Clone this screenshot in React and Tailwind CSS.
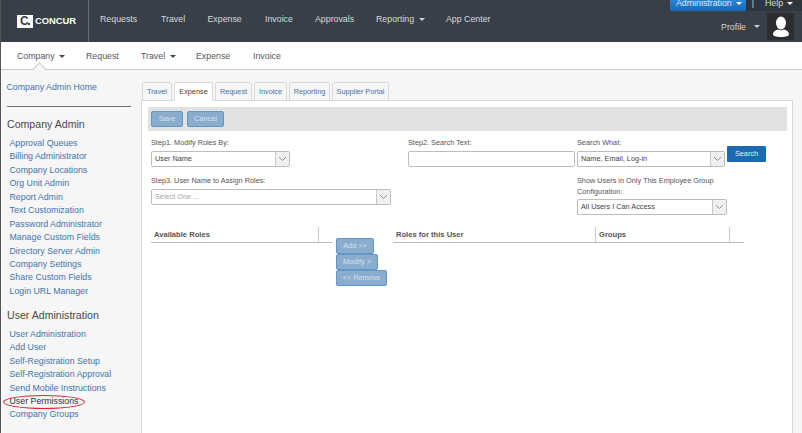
const Caret = ({ c = "border-t-[#cfd2d6]", cls = "" }) => (
  <span className={`inline-block w-0 h-0 border-x-[3px] border-x-transparent border-t-[3px] ${c} ${cls}`} />
);

const Chevron = () => (
  <svg width="9" height="6" viewBox="0 0 9 6" fill="none"><path d="M1 1l3.5 3.5L8 1" stroke="#8d9194" strokeWidth="1" /></svg>
);

const Select = ({ w, text, muted }) => (
  <div className={`${w} h-[16px] flex bg-white border border-[#bdbdbd] rounded-[2px] overflow-hidden`}>
    <div className={`flex-1 pl-[3px] text-[7.3px] leading-[14px] whitespace-nowrap ${muted ? "text-[#a8a8a8]" : "text-[#444]"}`}>{text}</div>
    <div className="w-[14px] bg-[#f0f0f0] border-l border-[#c8c8c8] flex items-center justify-center"><Chevron /></div>
  </div>
);

const Label = ({ children, cls = "" }) => <div className={`text-[7.3px] text-[#555] ${cls}`}>{children}</div>;

const SideLink = ({ children }) => <a className="block pl-[8.5px] h-[13.45px] leading-[13.45px] text-[#3f74ad] text-[8.8px] whitespace-nowrap">{children}</a>;

const companyLinks = ["Approval Queues","Billing Administrator","Company Locations","Org Unit Admin","Report Admin","Text Customization","Password Administrator","Manage Custom Fields","Directory Server Admin","Company Settings","Share Custom Fields","Login URL Manager"];
const userLinks = ["User Administration","Add User","Self-Registration Setup","Self-Registration Approval","Send Mobile Instructions"];
const tabs = [["Travel",30],["Expense",39],["Request",37],["Invoice",33],["Reporting",41],["Supplier Portal",57]];

const PaleBtn = ({ children, w, cls = "" }) => (
  <div className={`${w} h-[16px] bg-[#8aaccd] border border-[#5f97c8] rounded-[2px] text-[#d6e2ee] text-[7.3px] leading-[14px] text-center ${cls}`}>{children}</div>
);

export default function App() {
  return (
    <div className="relative w-[802px] h-[433px] overflow-hidden bg-[#f6f6f6] border-l border-[#555] font-['Liberation_Sans',Arial,sans-serif]">
      {/* top header */}
      <header className="relative h-[42px] bg-[#383f48] flex">
        <div className="w-[88px] h-full border-r border-[#666c74] flex items-center pl-[16px] gap-[2px]">
          <div className="w-[16px] h-[13px] bg-white relative overflow-hidden">
            <span className="absolute left-[3px] top-0 text-[#383f48] text-[12px] font-bold leading-[13px]">C</span>
            <span className="absolute left-[11px] top-[8px] w-[2px] h-[2px] bg-[#383f48]" />
          </div>
          <span className="text-white text-[9.4px] font-bold">CONCUR</span>
        </div>
        <nav className="flex text-[8.8px] text-[#d7d9dc] pt-[13px] leading-[12px] whitespace-nowrap">
          <span className="ml-[11px] w-[61px]">Requests</span>
          <span className="w-[46.5px]">Travel</span>
          <span className="w-[57.5px]">Expense</span>
          <span className="w-[50px]">Invoice</span>
          <span className="w-[61px]">Approvals</span>
          <span className="w-[70px]">Reporting <Caret cls="ml-[2px] align-middle" /></span>
          <span>App Center</span>
        </nav>
        <div className="ml-auto w-[132px] h-full flex flex-col items-end">
          <div className="w-full h-[11px] flex bg-[#30363d]">
            <div className="w-[76px] h-[11px] bg-gradient-to-b from-[#2a86d8] to-[#1668b4] text-[#dbe9f6] text-[8.8px] leading-[7px] pl-[6px] whitespace-nowrap">Administration <Caret c="border-t-white" cls="ml-[2px] align-middle" /></div>
            <div className="w-[14px] text-[#cfd2d6] text-[8.8px] leading-[6px] text-center">|</div>
            <div className="ml-[5px] text-[#d7d9dc] text-[8.8px] leading-[7px] whitespace-nowrap">Help <Caret c="border-t-white" cls="ml-[1px] align-middle" /></div>
          </div>
          <div className="flex items-start pr-[8px] pt-[2px]">
            <span className="text-[#cfd2d6] text-[8.8px] mt-[8px] leading-[12px]">Profile</span>
            <Caret cls="ml-[8px] mt-[12px]" />
            <div className="ml-[7px] w-[27px] h-[27px] bg-[#2b2d30] flex items-center justify-center">
              <svg width="18" height="22" viewBox="0 0 18 22" fill="white"><ellipse cx="9" cy="7" rx="5" ry="6.5" /><path d="M1 18.5c0-3 3-4.5 5-5 1.5 1 4.5 1 6 0 2 .5 5 2 5 5 0 1.5-3 2.5-8 2.5s-8-1-8-2.5z" /></svg>
            </div>
          </div>
        </div>
      </header>

      {/* sub nav */}
      <div className="relative h-[28px] bg-white border-b border-[#c9c9c9] flex text-[8.8px] text-[#55585c] leading-[29px] whitespace-nowrap">
        <span className="ml-[16px] w-[69px]">Company <Caret c="border-t-[#444]" cls="ml-[2px] align-middle" /></span>
        <span className="w-[55px]">Request</span>
        <span className="w-[55px]">Travel <Caret c="border-t-[#444]" cls="ml-[2px] align-middle" /></span>
        <span className="w-[57px]">Expense</span>
        <span>Invoice</span>
        <span className="absolute left-[33.5px] -bottom-[4px] w-[9px] h-[9px] bg-[#f6f6f6] border-l border-t border-[#c9c9c9] rotate-45" />
      </div>

      {/* body */}
      <div className="flex">
        <aside className="w-[140px] shrink-0">
          <a className="block pl-[5.5px] mt-[11px] text-[#3f74ad] text-[8.8px] leading-[13px]">Company Admin Home</a>
          <div className="ml-[6px] w-[124px] mt-[12px] border-t border-[#6e6e6e]" />
          <h3 className="pl-[6px] mt-[9px] text-[10.6px] leading-[16px] font-normal text-[#4a4a4a]">Company Admin</h3>
          <div className="mt-[5px]">{companyLinks.map(l => <SideLink key={l}>{l}</SideLink>)}</div>
          <h3 className="pl-[6px] mt-[8.6px] text-[10.6px] leading-[16px] font-normal text-[#4a4a4a]">User Administration</h3>
          <div className="mt-[5px]">
            {userLinks.map(l => <SideLink key={l}>{l}</SideLink>)}
            <a className="block pl-[8.5px] h-[13.45px] leading-[13.45px] text-[#333] text-[8.8px]">User Permissions</a>
            <SideLink>Company Groups</SideLink>
          </div>
        </aside>

        <main className="w-[652px] shrink-0 pt-[12px]">
          <div className="flex pl-[1px] gap-[2px] h-[19px] relative z-10">
            {tabs.map(([t, w]) => (
              <div key={t} style={{ width: w }} className={`shrink-0 text-center text-[7.3px] leading-[17px] border border-[#d9d9d9] rounded-t-[2px] whitespace-nowrap ${t === "Expense" ? "bg-white border-b-white text-[#444]" : "bg-[#f6f6f6] text-[#3f74ad]"}`}>{t}</div>
            ))}
          </div>
          <div className="bg-white border border-[#d9d9d9] h-[340px] -mt-[1px] px-[6px] pt-[6px]">
            <div className="w-[639px] h-[24px] bg-[#e1e3e2] flex items-start pt-[4px] pl-[3px] gap-[4px]">
              <PaleBtn w="w-[32px]">Save</PaleBtn>
              <PaleBtn w="w-[37px]">Cancel</PaleBtn>
            </div>

            <div className="grid grid-cols-[240px_167px_1fr] gap-x-[2px] pl-[3px] mt-[7px]">
              <div>
                <Label cls="h-[13px] leading-[10px]">Step1. Modify Roles By:</Label>
                <Select w="w-[139px]" text="User Name" />
              </div>
              <div className="ml-[15px] w-[167px]">
                <Label cls="h-[13px] leading-[10px]">Step2. Search Text:</Label>
                <div className="h-[16px] bg-white border border-[#bdbdbd] rounded-[2px]" />
              </div>
              <div className="ml-[15px] flex items-start gap-[2px]">
                <div>
                  <Label cls="h-[13px] leading-[10px]">Search What:</Label>
                  <Select w="w-[148px]" text="Name, Email, Log-in" />
                </div>
                <div className="w-[39px] h-[16px] mt-[8px] bg-[#1c6bb0] rounded-[1px] text-[#e3edf6] text-[7.3px] leading-[16px] text-center">Search</div>
              </div>

              <div className="mt-[9px]">
                <Label cls="h-[13px] leading-[10px]">Step3. User Name to Assign Roles:</Label>
                <Select w="w-[240px]" text="Select One ..." muted />
              </div>
              <div />
              <div className="ml-[15px] mt-[8px]">
                <Label cls="w-[150px] leading-[11px]">Show Users in Only This Employee Group Configuration:</Label>
                <Select w="w-[150px] mt-[2px]" text="All Users I Can Access" />
              </div>
            </div>

            <div className="flex pl-[3px] mt-[12px]">
              <div className="w-[181px] h-[16px] border-b border-[#bdbdbd] flex">
                <div className="w-[168px] border-r border-[#c9c9c9] pl-[3px] text-[7.6px] font-bold leading-[15px] text-[#555]">Available Roles</div>
              </div>
              <div className="ml-[4px] w-[57px] pt-[11px] flex flex-col">
                <PaleBtn w="w-[38px]">{"Add >>"}</PaleBtn>
                <PaleBtn w="w-[42px]">{"Modify >"}</PaleBtn>
                <PaleBtn w="w-[51px]">{"<< Remove"}</PaleBtn>
              </div>
              <div className="w-[351px] h-[16px] border-b border-[#bdbdbd] flex text-[7.6px] font-bold leading-[15px] text-[#555]">
                <div className="w-[203px] border-r border-[#c9c9c9] pl-[3px]">Roles for this User</div>
                <div className="w-[134px] border-r border-[#c9c9c9] pl-[3px]">Groups</div>
              </div>
            </div>
          </div>
        </main>
      </div>

      {/* highlight ellipse over link */}
      <div className="absolute left-[2px] top-[394.5px] w-[82px] h-[14px] rounded-[50%] border-[1.5px] border-[#d9272e]" />
    </div>
  );
}
